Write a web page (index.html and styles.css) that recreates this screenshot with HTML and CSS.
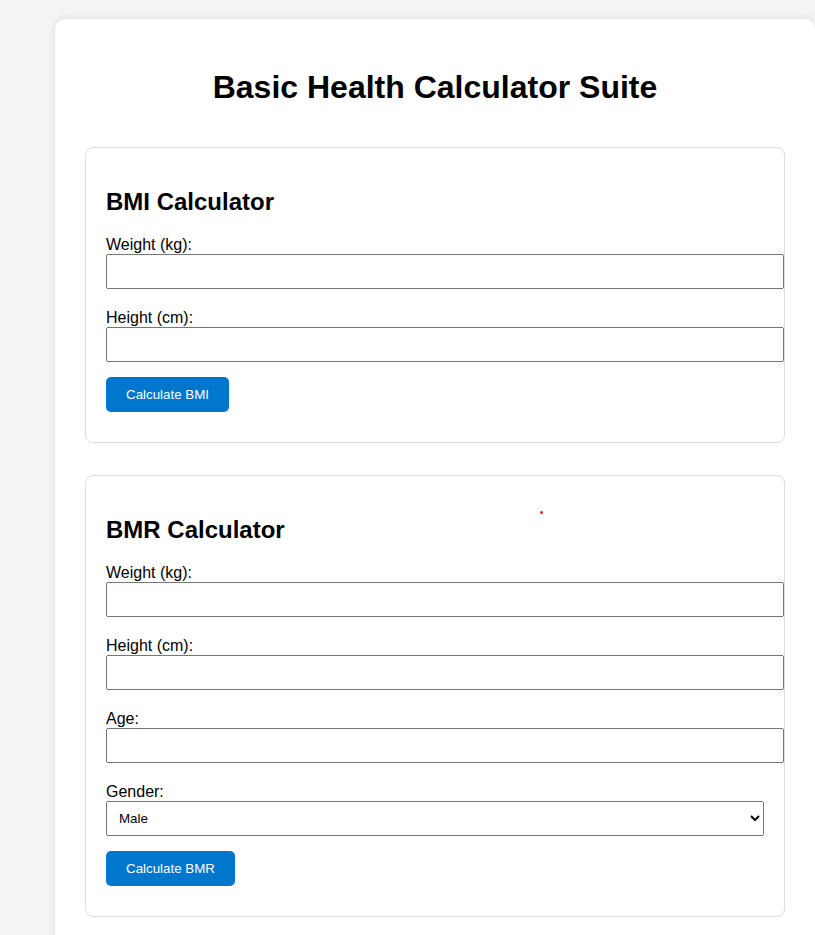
FILE: index.html
```html
<!DOCTYPE html>
<html lang="en">
<head>
<meta charset="utf-8">
<title>Basic Health Calculator Suite</title>
<link rel="stylesheet" href="styles.css">
</head>
<body>
<div class="container">
  <h1 class="title">Basic Health Calculator Suite</h1>
  <div class="card">
    <h2 class="card-title">BMI Calculator</h2>
    <label class="field-label" for="bmi-weight">Weight (kg):</label>
    <input class="field-input" type="number" id="bmi-weight">
    <label class="field-label" for="bmi-height">Height (cm):</label>
    <input class="field-input" type="number" id="bmi-height">
    <button class="calc-btn" type="button">Calculate BMI</button>
    <div class="result"></div>
  </div>
  <div class="card">
    <span class="dot"></span>
    <h2 class="card-title">BMR Calculator</h2>
    <label class="field-label" for="bmr-weight">Weight (kg):</label>
    <input class="field-input" type="number" id="bmr-weight">
    <label class="field-label" for="bmr-height">Height (cm):</label>
    <input class="field-input" type="number" id="bmr-height">
    <label class="field-label" for="bmr-age">Age:</label>
    <input class="field-input" type="number" id="bmr-age">
    <label class="field-label" for="bmr-gender">Gender:</label>
    <select class="field-select" id="bmr-gender">
      <option>Male</option>
      <option>Female</option>
    </select>
    <button class="calc-btn" type="button">Calculate BMR</button>
    <div class="result"></div>
  </div>
</div>
</body>
</html>
```

FILE: styles.css
```css
html, body {
  margin: 0;
  padding: 0;
}
body {
  background: #f4f4f4;
  font-family: "Liberation Sans", Arial, sans-serif;
  color: #000;
  overflow: hidden;
}
.container {
  box-sizing: border-box;
  width: 760px;
  margin: 19px 0 0 55px;
  padding: 30px;
  background: #fff;
  border-radius: 10px;
  box-shadow: 0 0 10px rgba(0, 0, 0, 0.1);
}
.title {
  font-size: 32px;
  font-weight: bold;
  text-align: center;
  margin: 20px 0 41px;
}
.card {
  position: relative;
  box-sizing: border-box;
  width: 700px;
  border: 1px solid #ddd;
  border-radius: 8px;
  padding: 20px;
  margin-bottom: 32px;
}
.card-title {
  font-size: 24px;
  font-weight: bold;
  margin: 20px 0 19px;
}
.field-label {
  display: block;
  font-size: 16px;
  margin-top: 20px;
}
.field-input {
  display: block;
  width: 100%;
  padding: 8px;
  margin: 0 0 15px;
  font-family: "Liberation Sans", Arial, sans-serif;
}
.field-select {
  display: block;
  width: 100%;
  padding: 8px;
  margin: 0 0 15px;
  font-family: "Liberation Sans", Arial, sans-serif;
}
.calc-btn {
  display: block;
  background: #0077cc;
  color: #fff;
  border: none;
  border-radius: 5px;
  padding: 10px 20px;
  font-family: "Liberation Sans", Arial, sans-serif;
  font-size: 13.333px;
  cursor: pointer;
}
.result {
  margin-top: 10px;
}
.dot {
  position: absolute;
  left: 454px;
  top: 35px;
  width: 3px;
  height: 3px;
  background: #e02020;
  border-radius: 50%;
}
```
